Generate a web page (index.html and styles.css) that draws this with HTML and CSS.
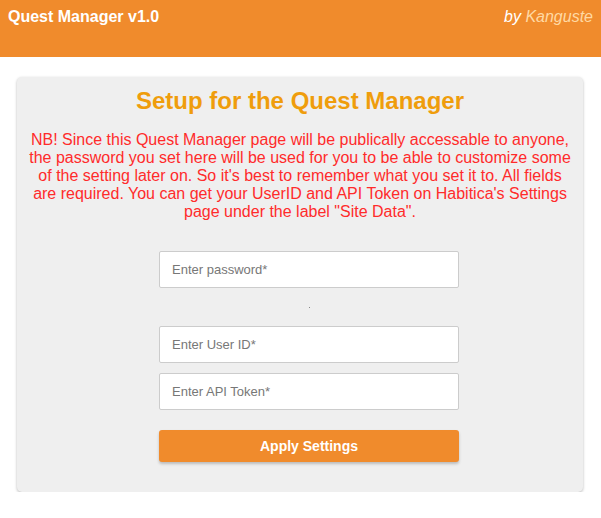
FILE: index.html
```html
<!DOCTYPE html>
<html>
<head>
<meta charset="utf-8">
<link rel="stylesheet" href="styles.css">
</head>
<body>
<header class="topbar">
  <div class="brand">Quest Manager v1.0</div>
  <div class="author">by <span class="author-name">Kanguste</span></div>
</header>
<main class="card">
  <h2 class="card-title">Setup for the Quest Manager</h2>
  <p class="notice">NB! Since this Quest Manager page will be publically accessable to anyone, the password you set here will be used for you to be able to customize some of the setting later on. So it's best to remember what you set it to. All fields are required. You can get your UserID and API Token on Habitica's Settings page under the label "Site Data".</p>
  <form class="setup-form">
    <input class="field" type="password" placeholder="Enter password*">
    <div class="spacer"><span class="dot"></span></div>
    <input class="field" type="text" placeholder="Enter User ID*">
    <input class="field field-last" type="text" placeholder="Enter API Token*">
    <button class="apply" type="button">Apply Settings</button>
  </form>
</main>
</body>
</html>
```

FILE: styles.css
```css
html, body {
  margin: 0;
  padding: 0;
  background: #ffffff;
  font-family: "Liberation Sans", Arial, sans-serif;
}

.topbar {
  height: 57px;
  box-sizing: border-box;
  background: #f08b2c;
  padding: 8px 8px 0 8px;
  display: flex;
  justify-content: space-between;
  align-items: flex-start;
  color: #ffffff;
  font-size: 16px;
}

.brand {
  font-weight: bold;
}

.author {
  font-style: italic;
}

.author-name {
  color: #ffd9a3;
}

.card {
  margin: 20px 18px 0 17px;
  background: #efefef;
  border-radius: 5px;
  box-shadow: 0 1px 3px rgba(0, 0, 0, 0.28);
  padding: 10px 10px 30px 10px;
  display: flex;
  flex-direction: column;
  align-items: center;
}

.card-title {
  margin: 0;
  font-size: 24px;
  font-weight: bold;
  color: #ef9d0c;
  text-align: center;
}

.notice {
  margin: 16px 0 0 0;
  font-size: 16px;
  color: #ff2b2b;
  text-align: center;
}

.setup-form {
  margin-top: 30px;
  padding-left: 18px;
  display: flex;
  flex-direction: column;
  align-items: center;
}

.field {
  width: 300px;
  height: 37px;
  box-sizing: border-box;
  border: 1px solid #cccccc;
  border-radius: 2px;
  background: #ffffff;
  padding: 0 12px;
  font-family: "Liberation Sans", Arial, sans-serif;
  font-size: 13px;
  color: #333333;
  margin: 0;
}

.field::placeholder {
  color: #777777;
}

.spacer {
  height: 38px;
  display: flex;
  align-items: center;
  justify-content: center;
}

.dot {
  width: 1px;
  height: 1px;
  background: #888888;
}

.field-last {
  margin-top: 10px;
}

.apply {
  margin-top: 20px;
  width: 300px;
  height: 32px;
  border: none;
  border-radius: 3px;
  background: #f08b2c;
  color: #ffffff;
  font-family: "Liberation Sans", Arial, sans-serif;
  font-size: 14px;
  font-weight: bold;
  box-shadow: 0 2px 3px rgba(0, 0, 0, 0.22);
  padding: 0;
}
```
